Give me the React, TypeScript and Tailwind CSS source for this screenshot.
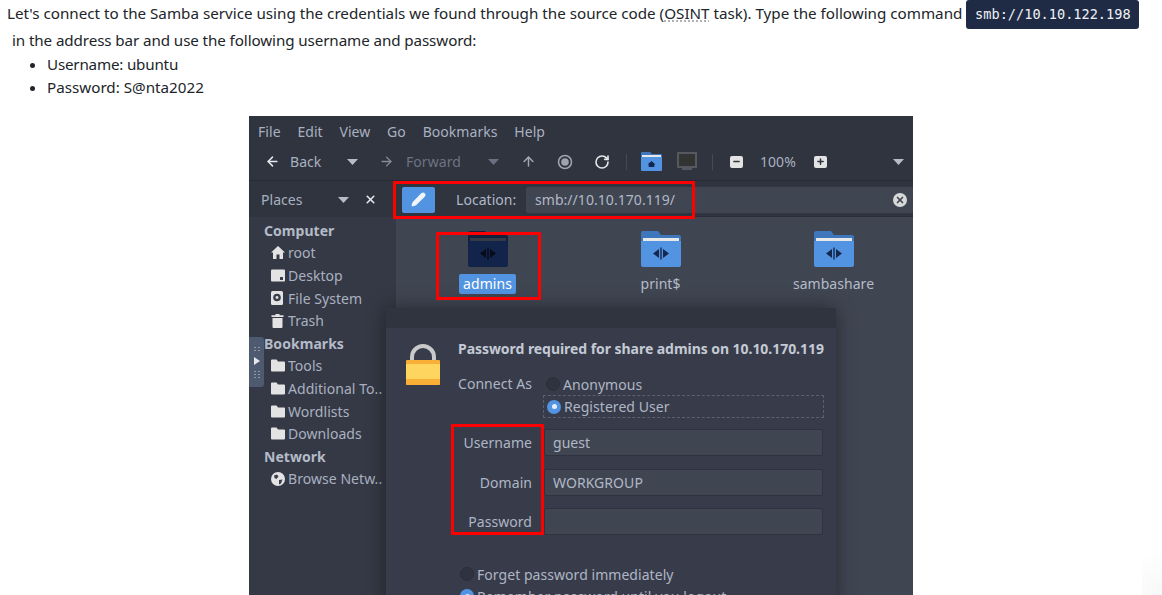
import { ArrowLeft, ArrowRight, ArrowUp, RotateCw, Pencil, X, Minus, Plus } from 'lucide-react';

const SANS = { fontFamily: '"Noto Sans", sans-serif' };

function Caret({ dim = false }: { dim?: boolean }) {
  return (
    <svg width="11" height="6" viewBox="0 0 11 6" className="shrink-0">
      <path d="M0 0h11L5.5 6z" fill={dim ? '#6a7080' : '#b6bcc8'} />
    </svg>
  );
}

function ShareFolder({ dark = false }: { dark?: boolean }) {
  const tab = dark ? '#121f3d' : '#3f77bd';
  const body = dark ? '#13244a' : '#5294e2';
  const sheet = dark ? '#343a48' : '#e8e8e8';
  const mark = dark ? '#060c1c' : '#14284d';
  return (
    <svg width="40" height="36" viewBox="0 0 40 36" className="shrink-0">
      <path d="M0 2a2 2 0 0 1 2-2h15l3 4h18a2 2 0 0 1 2 2v6H0z" fill={tab} />
      <rect x="2" y="7" width="36" height="4" fill={sheet} />
      <path d="M0 10h40v24a2 2 0 0 1-2 2H2a2 2 0 0 1-2-2z" fill={body} />
      <path d="M12 22.500l6-4.500v9zM28 22.500l-6-4.500v9z" fill={mark} />
      <rect x="19.3" y="16.500" width="1.4" height="12" fill={mark} />
    </svg>
  );
}

function PlainFolder() {
  return (
    <svg width="14" height="13" viewBox="0 0 14 13">
      <path d="M0 1.5A1 1 0 0 1 1 .5h4.500l1.500 2h6a1 1 0 0 1 1 1v8a1 1 0 0 1-1 1H1a1 1 0 0 1-1-1z" fill="#e3e3e3" />
    </svg>
  );
}

function HomeIcon() {
  return (
    <svg width="14" height="13" viewBox="0 0 14 13">
      <path d="M7 0l7 6.500h-2V13H8.500V8.500h-3V13H2V6.500H0z" fill="#e3e3e3" />
    </svg>
  );
}

function DesktopIcon() {
  return (
    <svg width="14" height="13" viewBox="0 0 14 13">
      <rect y="0.5" width="14" height="12" rx="1" fill="#e3e3e3" />
      <path d="M9 8h3v3H9z" fill="#3a3f4d" />
    </svg>
  );
}

function DiskIcon() {
  return (
    <svg width="12" height="14" viewBox="0 0 12 14">
      <rect width="12" height="14" rx="1.5" fill="#e3e3e3" />
      <circle cx="6" cy="6.5" r="3.8" fill="#3a3f4d" />
      <circle cx="6" cy="6.5" r="1.4" fill="#e3e3e3" />
    </svg>
  );
}

function TrashIcon() {
  return (
    <svg width="13" height="14" viewBox="0 0 13 14">
      <path d="M4.500 0h4v1.200h4V3H.5V1.200h4zM1.500 4h10v9a1 1 0 0 1-1 1h-8a1 1 0 0 1-1-1z" fill="#e3e3e3" />
    </svg>
  );
}

function GlobeIcon() {
  return (
    <svg width="14" height="14" viewBox="0 0 14 14">
      <circle cx="7" cy="7" r="7" fill="#e3e3e3" />
      <path d="M3 3.500l3-1 1.500 2-2 2.500-2-1zM8 8l3.500-.5L10 11.500l-2 1z" fill="#3a3f4d" />
    </svg>
  );
}

function SideItem({ icon, label }: { icon: React.ReactNode; label: string }) {
  return (
    <div className="flex h-[22.6px] items-center pl-[22px] text-[#a9b1c0]">
      <span className="flex w-[17px] shrink-0 items-center">{icon}</span>
      <span className="whitespace-nowrap">{label}</span>
    </div>
  );
}

function SideHead({ label }: { label: string }) {
  return <div className="flex h-[22.6px] items-center pl-[15px] font-bold text-[#b4bbc8]">{label}</div>;
}

function Entry({ label, value }: { label: string; value?: string }) {
  return (
    <div className="flex h-[27px] items-center">
      <span className="w-[146px] shrink-0 text-right text-[#aeb6c5]">{label}</span>
      <div className="ml-[12px] flex h-[27px] w-[279px] items-center rounded-[2px] border border-[#2f333f] bg-[#404552] pl-[8px] text-[#b0b8c6]">
        {value}
      </div>
    </div>
  );
}

function Radio({ on = false }: { on?: boolean }) {
  return on ? (
    <span className="flex h-[14px] w-[14px] shrink-0 items-center justify-center rounded-full bg-[#5294e2]">
      <span className="h-[5px] w-[5px] rounded-full bg-[#e8eef8]" />
    </span>
  ) : (
    <span className="h-[14px] w-[14px] shrink-0 rounded-full border border-[#2b2f3a] bg-[#2f3340]" />
  );
}

function FileItem({ label, dark = false }: { label: string; dark?: boolean }) {
  return (
    <div className="flex w-[173px] shrink-0 flex-col items-center">
      <ShareFolder dark={dark} />
      <span
        className={
          dark
            ? 'mt-[7px] rounded-[2px] bg-[#5294e2] px-[4px] leading-[20px] text-white'
            : 'mt-[7px] leading-[20px] text-[#b4bbc8]'
        }
      >
        {label}
      </span>
    </div>
  );
}

export default function App() {
  return (
    <div className="relative h-[595px] w-[1162px] overflow-hidden bg-white text-[#212529]" style={SANS}>
      {/* Article text */}
      <div className="text-[15.2px]">
        <div className="flex h-[28px] items-center whitespace-nowrap pl-[7px]">
          <span className="-mt-[2px]">
            Let's connect to the Samba service using the credentials we found through the source code (
            <abbr className="underline decoration-dotted decoration-[#9a9a9a] underline-offset-2">OSINT</abbr> task).
            Type the following command
          </span>
          <code
            className="ml-[4px] flex h-[29px] w-[173px] items-center justify-center rounded-[3px] bg-[#1f2b45] text-[13.6px] text-[#eef1f6]"
            style={{ fontFamily: '"DejaVu Sans Mono", monospace' }}
          >
            smb://10.10.122.198
          </code>
        </div>
        <div className="mt-[1px] flex h-[23px] items-center whitespace-nowrap pl-[12px] tracking-[-0.1px]">
          in the address bar and use the following username and password:
        </div>
        <ul className="ml-[47px] mt-[1px] list-disc">
          <li className="h-[23px] leading-[23px] tracking-[-0.2px]">Username: ubuntu</li>
          <li className="h-[23px] leading-[23px]">Password: S@nta2022</li>
        </ul>
      </div>

      {/* Screenshot of the file manager */}
      <div className="relative mx-auto mt-[17px] flex h-[479px] w-[664px] flex-col overflow-hidden bg-[#2f343f] text-[14px] tracking-[0.05px]">
        {/* Menu bar */}
        <div className="flex h-[30px] shrink-0 items-center gap-[16.8px] pl-[9px] text-[#a9b1c0]">
          <span>File</span>
          <span>Edit</span>
          <span>View</span>
          <span>Go</span>
          <span>Bookmarks</span>
          <span>Help</span>
        </div>

        {/* Toolbar */}
        <div className="flex h-[34px] shrink-0 items-center pb-[3px] pl-[16px] text-[#a9b1c0]">
          <ArrowLeft size={15} color="#e6e8ec" strokeWidth={2.4} />
          <span className="ml-[10px] w-[57px]">Back</span>
          <Caret />
          <ArrowRight size={15} color="#858b98" strokeWidth={2.2} className="ml-[21px]" />
          <span className="ml-[12px] w-[82px] text-[#6d7382]">Forward</span>
          <Caret dim />
          <ArrowUp size={15} color="#a0a6b2" strokeWidth={2.4} className="ml-[22px]" />
          <svg width="16" height="16" viewBox="0 0 16 16" className="ml-[21px]">
            <circle cx="8" cy="8" r="6.5" fill="none" stroke="#9da3af" strokeWidth="1.6" />
            <circle cx="8" cy="8" r="3.8" fill="#9da3af" />
          </svg>
          <RotateCw size={16} color="#e6e8ec" strokeWidth={2.4} className="ml-[21px]" />
          <span className="ml-[16px] h-[16px] w-px bg-[#454a57]" />
          <svg width="21" height="19" viewBox="0 0 21 19" className="ml-[14px]">
            <path d="M0 1a1 1 0 0 1 1-1h8l2 2h9a1 1 0 0 1 1 1v4H0z" fill="#3f77bd" />
            <rect x="1" y="3" width="19" height="3" fill="#e8e8e8" />
            <path d="M0 5h21v13a1 1 0 0 1-1 1H1a1 1 0 0 1-1-1z" fill="#5294e2" />
            <path d="M10.500 9l4 3.400h-1.200V15H7.700v-2.600H6.500z" fill="#14284d" />
          </svg>
          <svg width="20" height="19" viewBox="0 0 20 19" className="ml-[15px]">
            <rect x="1" y="1" width="18" height="14" fill="#333333" stroke="#565860" strokeWidth="2" />
            <rect x="5" y="16" width="10" height="2" fill="#565860" />
          </svg>
          <span className="ml-[15px] h-[16px] w-px bg-[#454a57]" />
          <span className="ml-[17px] flex h-[12px] w-[13px] items-center justify-center rounded-[2px] bg-[#e3e3e3]">
            <Minus size={9} color="#2f343f" strokeWidth={4} />
          </span>
          <span className="ml-[17px] w-[54px]">100%</span>
          <span className="flex h-[12px] w-[13px] items-center justify-center rounded-[2px] bg-[#e3e3e3]">
            <Plus size={9} color="#2f343f" strokeWidth={4} />
          </span>
          <span className="ml-[66px]">
            <Caret />
          </span>
        </div>

        {/* Side pane + file view */}
        <div className="flex min-h-0 flex-1 border-t border-[#262a33]">
          <div className="w-[147px] shrink-0 bg-[#353945]">
            <div className="flex h-[36px] items-center bg-[#2f343f] pl-[12px] pt-[1px] text-[#a9b1c0]">
              <span className="w-[77px]">Places</span>
              <Caret />
              <X size={13} color="#e6e8ec" strokeWidth={3} className="ml-[15px]" />
            </div>
            <div className="pt-[2px]">
              <SideHead label="Computer" />
              <SideItem icon={<HomeIcon />} label="root" />
              <SideItem icon={<DesktopIcon />} label="Desktop" />
              <SideItem icon={<DiskIcon />} label="File System" />
              <SideItem icon={<TrashIcon />} label="Trash" />
              <SideHead label="Bookmarks" />
              <SideItem icon={<PlainFolder />} label="Tools" />
              <SideItem icon={<PlainFolder />} label="Additional To.." />
              <SideItem icon={<PlainFolder />} label="Wordlists" />
              <SideItem icon={<PlainFolder />} label="Downloads" />
              <SideHead label="Network" />
              <SideItem icon={<GlobeIcon />} label="Browse Netw.." />
            </div>
          </div>

          <div className="min-w-0 flex-1 bg-[#404552]">
            <div className="flex h-[36px] items-center border-b border-[#2a2e38] bg-[#2f343f] pl-[6px] pt-[2px]">
              <span className="flex h-[26px] w-[33px] items-center justify-center rounded-[2px] bg-[#5294e2]">
                <Pencil size={15} color="#f2f5fa" fill="#f2f5fa" />
              </span>
              <span className="ml-[21px] w-[70px] text-[#b0b8c6]">Location:</span>
              <span className="flex h-[26px] w-[387px] items-center justify-between rounded-[2px] bg-[#404552] pl-[9px] pr-[6px] text-[#b0b8c6]">
                smb://10.10.170.119/
                <span className="flex h-[14px] w-[14px] items-center justify-center rounded-full bg-[#d8d8d8]">
                  <X size={10} color="#404552" strokeWidth={4} />
                </span>
              </span>
            </div>
            <div className="flex pl-[5px] pt-[14px]">
              <FileItem label="admins" dark />
              <FileItem label="print$" />
              <FileItem label="sambashare" />
            </div>
          </div>
        </div>

        {/* Handle over the side pane */}
        <div className="absolute left-0 top-[221px] flex h-[50px] w-[15px] flex-col items-center justify-center gap-[5px] rounded-r-[3px] bg-[#4d5a70]">
          <span className="h-[6px] w-[8px] bg-[radial-gradient(#8e99ab_1px,transparent_1px)] bg-[length:4px_3px]" />
          <svg width="6" height="8" viewBox="0 0 6 8">
            <path d="M0 0l6 4-6 4z" fill="#e6e8ec" />
          </svg>
          <span className="h-[9px] w-[8px] bg-[radial-gradient(#8e99ab_1px,transparent_1px)] bg-[length:4px_3px]" />
        </div>

        {/* Password dialog */}
        <div className="absolute left-[137px] top-[192px] h-[300px] w-[450px] bg-[#383c4a] shadow-[0_0_18px_rgba(0,0,0,0.4)]">
          <div className="h-[20px] bg-[#2f343f]" />
          <div className="flex pl-[20px] pt-[16px]">
            <svg width="34" height="41" viewBox="0 0 34 41" className="shrink-0">
              <path d="M6 17V13a11 11 0 0 1 22 0v4" fill="none" stroke="#c9c9c9" strokeWidth="4" />
              <rect y="16" width="34" height="25" rx="1.500" fill="#fdd55f" />
              <path d="M0 17.500A1.500 1.500 0 0 1 1.500 16h31a1.500 1.500 0 0 1 1.500 1.500V20H0zM0 35h34v4.500a1.500 1.500 0 0 1-1.500 1.500h-31A1.500 1.500 0 0 1 0 39.500z" fill="#f9ae36" />
            </svg>
            <div className="ml-[18px] -mt-[4px]">
              <div className="whitespace-nowrap font-bold leading-[18px] tracking-[-0.05px] text-[#c4cad5]">
                Password required for share admins on 10.10.170.119
              </div>
            </div>
          </div>
          <div className="-mt-[12px] pl-[72px]">
            <div className="flex h-[22px] items-center">
              <span className="w-[88px] -translate-y-[1px] text-[#aeb6c5]">Connect As</span>
              <Radio />
              <span className="ml-[3px] text-[#aeb6c5]">Anonymous</span>
            </div>
            <div className="ml-[85px] flex h-[23px] w-[281px] items-center border border-dashed border-[#5a6070] pl-[3px]">
              <Radio on />
              <span className="ml-[3px] text-[#aeb6c5]">Registered User</span>
            </div>
          </div>
          <div className="mt-[11px] flex flex-col gap-[12.500px]">
            <Entry label="Username" value="guest" />
            <Entry label="Domain" value="WORKGROUP" />
            <Entry label="Password" />
          </div>
          <div className="mt-[28px] flex h-[22px] items-center pl-[74px] text-[#aeb6c5]">
            <Radio />
            <span className="ml-[3px]">Forget password immediately</span>
          </div>
          <div className="flex h-[22px] items-center pl-[74px] text-[#aeb6c5]">
            <Radio on />
            <span className="ml-[3px]">Remember password until you logout</span>
          </div>
        </div>

        {/* Red annotations */}
        <div className="absolute left-[144px] top-[65px] h-[38px] w-[302px] border-[3px] border-[#ff0000]" />
        <div className="absolute left-[187px] top-[116px] h-[68px] w-[105px] border-[3px] border-[#ff0000]" />
        <div className="absolute left-[202px] top-[308px] h-[111px] w-[93px] border-[3px] border-[#ff0000]" />
      </div>

      <div className="absolute bottom-0 right-0 h-[60px] w-[20px] bg-[radial-gradient(circle_at_100%_100%,#f7f7f7,transparent_70%)]" />
    </div>
  );
}
